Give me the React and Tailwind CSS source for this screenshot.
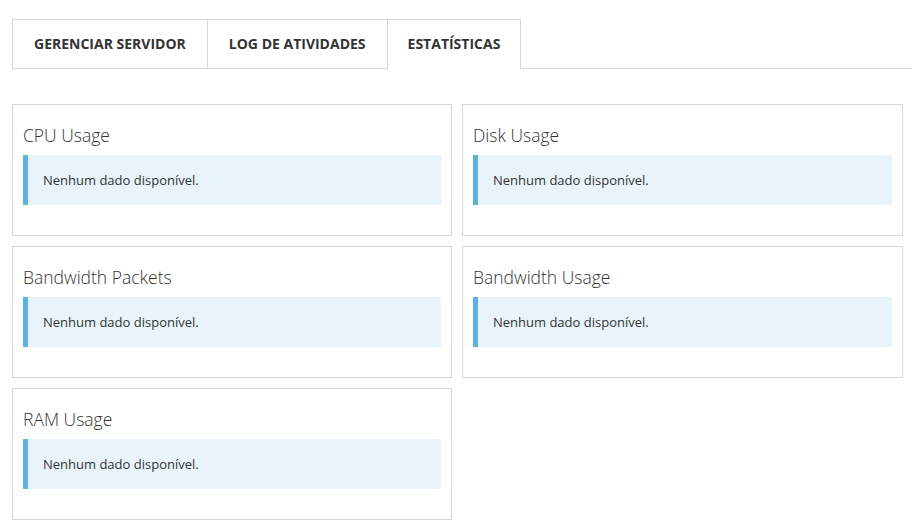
export default function App() {
  const tabs = [
    { label: "GERENCIAR SERVIDOR", active: false, pad: "px-[21px]" },
    { label: "LOG DE ATIVIDADES", active: false, pad: "px-[21px]" },
    { label: "ESTATÍSTICAS", active: true, pad: "px-[20px]" },
  ];
  const cards = ["CPU Usage", "Disk Usage", "Bandwidth Packets", "Bandwidth Usage", "RAM Usage"];
  return (
    <div className="min-h-[528px] bg-white text-[#333]" style={{ fontFamily: '"Open Sans", "Liberation Sans", sans-serif' }}>
      <div className="pt-[19px] ml-3 flex border-b border-[#d6d6d6]">
        {tabs.map((t, i) => (
          <div
            key={t.label}
            className={
              "h-[50px] -mb-px pb-[2px] flex items-center text-[14px] font-bold text-[#333] border-t border-r border-[#d6d6d6] bg-white " +
              t.pad + " " +
              (i === 0 ? "border-l " : "") +
              (t.active ? "border-b border-b-white" : "border-b")
            }
          >
            {t.label}
          </div>
        ))}
      </div>
      <div className="mt-[35px] ml-3 w-[891px] grid grid-cols-[440px_441px] gap-[10px]">
        {cards.map((c) => (
          <div key={c} className="border border-[#d6d6d6] h-[132px] px-[10px] pt-[10px]">
            <div className="h-10 pt-[2px] flex items-center text-[17.5px] font-light text-[#333] leading-none">{c}</div>
            <div className="h-[50px] bg-[#e8f4fa] border-l-[5px] border-[#5bb5e0] pl-[15px] pt-px flex items-center text-[13px] text-[#333]">
              Nenhum dado disponível.
            </div>
          </div>
        ))}
      </div>
    </div>
  );
}
